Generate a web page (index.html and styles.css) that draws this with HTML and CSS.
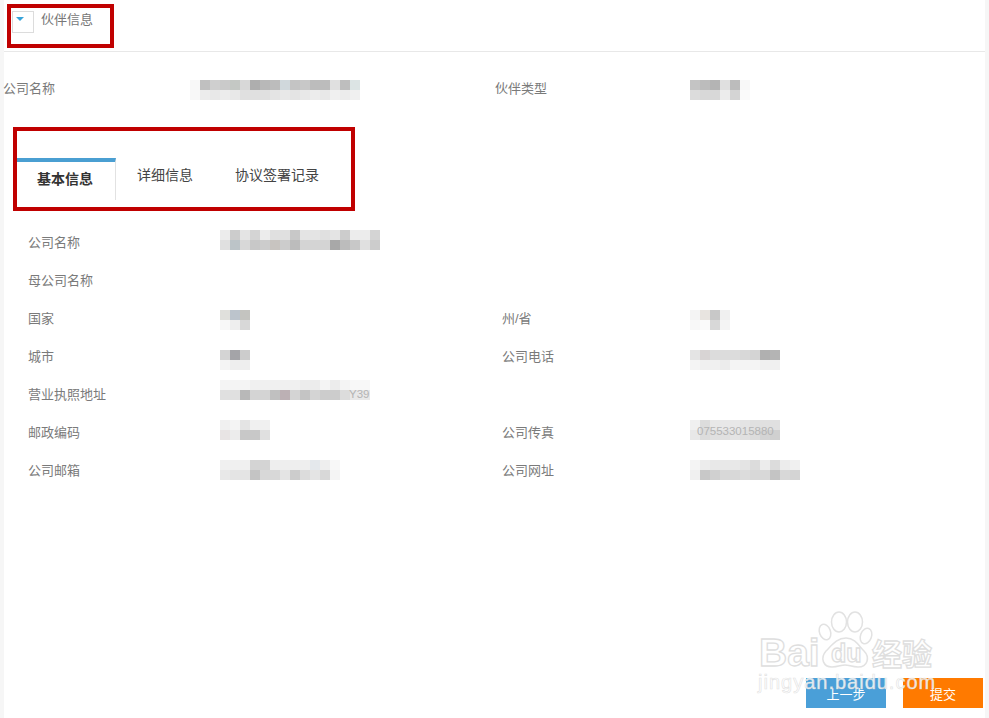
FILE: index.html
```html
<!DOCTYPE html>
<html lang="zh-CN">
<head>
<meta charset="utf-8">
<title>伙伴信息</title>
<link rel="stylesheet" href="styles.css">
</head>
<body>
<main class="page">
  <header class="head">
    <span class="check"><svg class="caret" viewBox="0 0 8 4" width="8" height="4"><path d="M0 0H8L4 4Z"/></svg></span>
    <span class="head-title">伙伴信息</span>
  </header>

  <section class="summary">
    <span class="label">公司名称</span>
    <svg class="mosaic mt8" width="170" height="20">
      <rect fill="#f8f8f8"/><rect x="10" fill="#c0c0c0"/><rect x="20" fill="#cfcfcf"/><rect x="30" fill="#cacaca"/><rect x="40" fill="#c4c8c4"/><rect x="50" fill="#d8d8d8"/><rect x="60" fill="#aeaeae"/><rect x="70" fill="#b8b8b8"/><rect x="80" fill="#bcbcbc"/><rect x="90" fill="#d0d8dc"/><rect x="100" fill="#c4c4c4"/><rect x="110" fill="#c8c8c8"/><rect x="120" fill="#bcbcbc"/><rect x="130" fill="#bcbcbc"/><rect x="140" fill="#e0e0e0"/><rect x="150" fill="#bebebe"/><rect x="160" fill="#dce4e4"/>
      <rect y="10" fill="#f8f8f8"/><rect x="10" y="10" fill="#ececec"/><rect x="20" y="10" fill="#e8e8e8"/><rect x="30" y="10" fill="#ececec"/><rect x="40" y="10" fill="#e8e8e8"/><rect x="50" y="10" fill="#e0e0e0"/><rect x="60" y="10" fill="#e0e0e0"/><rect x="70" y="10" fill="#e0e0e0"/><rect x="80" y="10" fill="#e4e4e4"/><rect x="90" y="10" fill="#e8e8e8"/><rect x="100" y="10" fill="#e4e4e4"/><rect x="110" y="10" fill="#e8e8e8"/><rect x="120" y="10" fill="#ececec"/><rect x="130" y="10" fill="#e8e8e8"/><rect x="140" y="10" fill="#f0f0f0"/><rect x="150" y="10" fill="#ececec"/><rect x="160" y="10" fill="#f0f0f0"/>
    </svg>
    <span class="label">伙伴类型</span>
    <svg class="mosaic mt8" width="60" height="20">
      <rect fill="#c4c4c4"/><rect x="10" fill="#bcbcbc"/><rect x="20" fill="#b4b4b4"/><rect x="30" fill="#e0e0e0"/><rect x="40" fill="#bcbcbc"/><rect x="50" fill="#f8f8f8"/>
      <rect y="10" fill="#dcdcdc"/><rect x="10" y="10" fill="#d8d8d8"/><rect x="20" y="10" fill="#d8d8d8"/><rect x="30" y="10" fill="#ececec"/><rect x="40" y="10" fill="#d4d4d4"/><rect x="50" y="10" fill="#fafafa"/>
    </svg>
  </section>

  <nav class="tabs">
    <span class="tab tab-active">基本信息</span>
    <span class="tab">详细信息</span>
    <span class="tab">协议签署记录</span>
  </nav>

  <section class="form">
    <span class="label">公司名称</span>
    <svg class="mosaic mt7" width="160" height="20">
      <rect fill="#ececec"/><rect x="10" fill="#cccccc"/><rect x="20" fill="#e4e4e4"/><rect x="30" fill="#d4d4d4"/><rect x="40" fill="#ececec"/><rect x="50" fill="#e0e0e0"/><rect x="60" fill="#e0e0e0"/><rect x="70" fill="#c8c8c8"/><rect x="80" fill="#e4e4e4"/><rect x="90" fill="#e4e4e4"/><rect x="100" fill="#e0e0e0"/><rect x="110" fill="#e4e4e4"/><rect x="120" fill="#cccccc"/><rect x="130" fill="#ececec"/><rect x="140" fill="#ececec"/><rect x="150" fill="#d4d4d4"/>
      <rect y="10" fill="#e0e0e0"/><rect x="10" y="10" fill="#bcc4c8"/><rect x="20" y="10" fill="#d8d8d8"/><rect x="30" y="10" fill="#c8c8c8"/><rect x="40" y="10" fill="#cccccc"/><rect x="50" y="10" fill="#c8c4c0"/><rect x="60" y="10" fill="#cccccc"/><rect x="70" y="10" fill="#bcbcbc"/><rect x="80" y="10" fill="#d4d4d4"/><rect x="90" y="10" fill="#d4d4d4"/><rect x="100" y="10" fill="#d4d4d4"/><rect x="110" y="10" fill="#a8a8a8"/><rect x="120" y="10" fill="#bcbcbc"/><rect x="130" y="10" fill="#c8c8c8"/><rect x="140" y="10" fill="#e0e0e0"/><rect x="150" y="10" fill="#cccccc"/>
    </svg>
    <span></span><span></span>

    <span class="label">母公司名称</span>
    <span></span><span></span><span></span>

    <span class="label">国家</span>
    <svg class="mosaic mt11" width="30" height="20">
      <rect fill="#e0e0dc"/><rect x="10" fill="#bcc4cc"/><rect x="20" fill="#c4c4c0"/>
      <rect y="10" fill="#f8f8f8"/><rect x="10" y="10" fill="#eeeeee"/><rect x="20" y="10" fill="#d8d8d8"/>
    </svg>
    <span class="label">州/省</span>
    <svg class="mosaic mt11" width="40" height="20">
      <rect fill="#f4f4f4"/><rect x="10" fill="#e8e4e0"/><rect x="20" fill="#c8c8c8"/><rect x="30" fill="#f0f0f0"/>
      <rect y="10" fill="#f8f8f8"/><rect x="10" y="10" fill="#fafafa"/><rect x="20" y="10" fill="#d8d8d8"/><rect x="30" y="10" fill="#f4f4f4"/>
    </svg>

    <span class="label">城市</span>
    <svg class="mosaic mt13" width="30" height="20">
      <rect fill="#d4d4d4"/><rect x="10" fill="#a4a4a8"/><rect x="20" fill="#cccccc"/>
      <rect y="10" fill="#f4f4f4"/><rect x="10" y="10" fill="#eeeeee"/><rect x="20" y="10" fill="#eeeeee"/>
    </svg>
    <span class="label">公司电话</span>
    <svg class="mosaic mt13" width="90" height="20">
      <rect fill="#e4e4e4"/><rect x="10" fill="#d8d4d4"/><rect x="20" fill="#dcdcdc"/><rect x="30" fill="#dcdcdc"/><rect x="40" fill="#dcdcdc"/><rect x="50" fill="#d8d8d8"/><rect x="60" fill="#d4d4d4"/><rect x="70" fill="#b0b0b0"/><rect x="80" fill="#b4b4b4"/>
      <rect y="10" fill="#f4f4f4"/><rect x="10" y="10" fill="#f0f0f0"/><rect x="20" y="10" fill="#f0f0f0"/><rect x="30" y="10" fill="#ececec"/><rect x="40" y="10" fill="#f4f4f4"/><rect x="50" y="10" fill="#f4f4f4"/><rect x="60" y="10" fill="#f4f4f4"/><rect x="70" y="10" fill="#f0f0f0"/><rect x="80" y="10" fill="#f0f0f0"/>
    </svg>

    <span class="label">营业执照地址</span>
    <svg class="mosaic mt5" width="150" height="20">
      <rect fill="#f4f4f4"/><rect x="10" fill="#f4f4f4"/><rect x="20" fill="#f4f4f4"/><rect x="30" fill="#f0f0f0"/><rect x="40" fill="#f0f0f0"/><rect x="50" fill="#f0f0f0"/><rect x="60" fill="#f0f0f0"/><rect x="70" fill="#f0f0f0"/><rect x="80" fill="#ececec"/><rect x="90" fill="#ececec"/><rect x="100" fill="#f4f4f4"/><rect x="110" fill="#ececec"/><rect x="120" fill="#f4f4f4"/><rect x="130" fill="#f8f8f8"/><rect x="140" fill="#f8f8f8"/>
      <rect y="10" fill="#e0e0e0"/><rect x="10" y="10" fill="#e0e0e0"/><rect x="20" y="10" fill="#b8b8b8"/><rect x="30" y="10" fill="#d4d4d4"/><rect x="40" y="10" fill="#d4d4d4"/><rect x="50" y="10" fill="#c0c0c0"/><rect x="60" y="10" fill="#bcb0b4"/><rect x="70" y="10" fill="#d4d4d4"/><rect x="80" y="10" fill="#c4c4c4"/><rect x="90" y="10" fill="#d4d4d4"/><rect x="100" y="10" fill="#cccccc"/><rect x="110" y="10" fill="#cccccc"/><rect x="120" y="10" fill="#dcdcdc"/><rect x="130" y="10" fill="#e8e8e8"/><rect x="140" y="10" fill="#e8e8e8"/>
      <text class="mosaic-text" x="129" y="18">Y39</text>
    </svg>
    <span></span><span></span>

    <span class="label">邮政编码</span>
    <svg class="mosaic mt7" width="50" height="20">
      <rect fill="#f0f0f0"/><rect x="10" fill="#f4f4f4"/><rect x="20" fill="#e4e4e4"/><rect x="30" fill="#f0f0f0"/><rect x="40" fill="#f0f0f0"/>
      <rect y="10" fill="#e8e4e4"/><rect x="10" y="10" fill="#ececec"/><rect x="20" y="10" fill="#c8c8c8"/><rect x="30" y="10" fill="#c8c8c8"/><rect x="40" y="10" fill="#e0e0e0"/>
    </svg>
    <span class="label">公司传真</span>
    <svg class="mosaic mt7" width="90" height="20">
      <rect fill="#f0f0f0"/><rect x="10" fill="#dcdcdc"/><rect x="20" fill="#e8e8e8"/><rect x="30" fill="#e8e8e8"/><rect x="40" fill="#e8e8e8"/><rect x="50" fill="#e4e4e4"/><rect x="60" fill="#e0e0e0"/><rect x="70" fill="#e0e0e0"/><rect x="80" fill="#e0e0e0"/>
      <rect y="10" fill="#e8e8e8"/><rect x="10" y="10" fill="#dcdcdc"/><rect x="20" y="10" fill="#e0e0e0"/><rect x="30" y="10" fill="#e0e0e0"/><rect x="40" y="10" fill="#e4e4e4"/><rect x="50" y="10" fill="#e0e0e0"/><rect x="60" y="10" fill="#dcdcdc"/><rect x="70" y="10" fill="#d4d4d4"/><rect x="80" y="10" fill="#d0d0d0"/>
      <text class="mosaic-text" x="7" y="15">075533015880</text>
    </svg>

    <span class="label">公司邮箱</span>
    <svg class="mosaic mt9" width="120" height="20">
      <rect fill="#f0f0f0"/><rect x="10" fill="#f0f0f0"/><rect x="20" fill="#f0f0f0"/><rect x="30" fill="#d4d4d4"/><rect x="40" fill="#d4d4d4"/><rect x="50" fill="#eeeeee"/><rect x="60" fill="#eeeeee"/><rect x="70" fill="#eeeeee"/><rect x="80" fill="#eeeeee"/><rect x="90" fill="#e4e8ec"/><rect x="100" fill="#eeeeee"/><rect x="110" fill="#f8f8f8"/>
      <rect y="10" fill="#e8e8e8"/><rect x="10" y="10" fill="#e4e4e4"/><rect x="20" y="10" fill="#e4e4e4"/><rect x="30" y="10" fill="#c4c4c4"/><rect x="40" y="10" fill="#d8d8d8"/><rect x="50" y="10" fill="#d8d8d8"/><rect x="60" y="10" fill="#e4e4e4"/><rect x="70" y="10" fill="#cccccc"/><rect x="80" y="10" fill="#dcdcdc"/><rect x="90" y="10" fill="#e4e4e4"/><rect x="100" y="10" fill="#d8d8d8"/><rect x="110" y="10" fill="#f4f4f4"/>
    </svg>
    <span class="label">公司网址</span>
    <svg class="mosaic mt9" width="110" height="20">
      <rect fill="#f4f4f4"/><rect x="10" fill="#ececec"/><rect x="20" fill="#e8e8e8"/><rect x="30" fill="#e8e8e8"/><rect x="40" fill="#e8e8e8"/><rect x="50" fill="#e4e4e4"/><rect x="60" fill="#dcdcdc"/><rect x="70" fill="#ececec"/><rect x="80" fill="#dcdcdc"/><rect x="90" fill="#ececec"/><rect x="100" fill="#f0f0f0"/>
      <rect y="10" fill="#f0f0f0"/><rect x="10" y="10" fill="#c8c8c8"/><rect x="20" y="10" fill="#d0d0d0"/><rect x="30" y="10" fill="#d8d8d8"/><rect x="40" y="10" fill="#d8d8d8"/><rect x="50" y="10" fill="#dcdcdc"/><rect x="60" y="10" fill="#d8d8d8"/><rect x="70" y="10" fill="#d8d8d8"/><rect x="80" y="10" fill="#c4c4c4"/><rect x="90" y="10" fill="#d8d8d8"/><rect x="100" y="10" fill="#d4d4d4"/>
    </svg>
  </section>

  <footer class="actions">
    <button class="btn btn-prev" type="button">上一步</button>
    <button class="btn btn-submit" type="button">提交</button>
  </footer>
</main>

<div class="mark mark-head"></div>
<div class="mark mark-tabs"></div>

<svg class="watermark" width="200" height="100" viewBox="750 605 200 100">
  <g class="wm-shape">
    <ellipse cx="825" cy="632" rx="5.5" ry="8" transform="rotate(-20 825 632)"/>
    <ellipse cx="839" cy="622" rx="7.5" ry="10"/>
    <ellipse cx="855" cy="622" rx="7.5" ry="10"/>
    <ellipse cx="866" cy="636" rx="5.5" ry="8" transform="rotate(20 866 636)"/>
    <path d="M846 638C855 638 859 646 864 651C870 657 868 667 858 667C852 667 849 665 845 665C841 665 838 667 832 667C823 667 820 658 826 651C832 645 837 638 846 638Z"/>
  </g>
  <text class="wm-text wm-bai" x="759" y="666">Bai</text>
  <text class="wm-text wm-du" x="831" y="662">du</text>
  <text class="wm-text wm-cn" x="872" y="665">经验</text>
  <text class="wm-url" x="758" y="689">jingyan.baidu.com</text>
</svg>
</body>
</html>
```

FILE: styles.css
```css
* { box-sizing: border-box; }

html, body {
  margin: 0;
  height: 718px;
  overflow: hidden;
}

body {
  position: relative;
  padding: 0 4px;
  background: #f6f6f6;
  font-family: "Liberation Sans", "Noto Sans CJK SC", sans-serif;
  font-size: 13px;
  color: #7a7a7a;
}

.page {
  display: flex;
  flex-direction: column;
  height: 718px;
  background: #fff;
}

.head {
  display: flex;
  align-items: flex-start;
  gap: 7px;
  height: 52px;
  padding: 11px 0 0 8px;
  border-bottom: 1px solid #e8e8e8;
}

.check {
  display: flex;
  justify-content: flex-start;
  flex: none;
  width: 22px;
  height: 22px;
  padding: 5px 0 0 3px;
  border: 1px solid #dcdcdc;
}

.caret { fill: #36a3d9; }

.head-title {
  line-height: 18px;
  color: #777;
}

.label {
  padding-top: 1px;
  line-height: 32px;
  white-space: nowrap;
}

.summary {
  display: grid;
  grid-template-columns: 187px 305px 195px 1fr;
  height: 32px;
  margin: 20px 0 0 -1px;
}

.mosaic {
  display: block;
  overflow: visible;
}

.mosaic rect {
  width: 10px;
  height: 10px;
}

.mosaic-text {
  font-family: "Liberation Sans", sans-serif;
  font-size: 11.5px;
  fill: #b4b4b4;
}

.mt5 { margin-top: 5px; }
.mt7 { margin-top: 7px; }
.mt8 { margin-top: 8px; }
.mt9 { margin-top: 9px; }
.mt11 { margin-top: 11px; }
.mt13 { margin-top: 13px; }

.tabs {
  display: flex;
  align-items: flex-start;
  margin-top: 54px;
  padding-left: 12px;
  font-size: 14px;
  color: #444;
}

.tab {
  height: 42px;
  padding: 0 21px;
  line-height: 34px;
}

.tab-active {
  width: 100px;
  padding: 0 0 0 21px;
  border-top: 4px solid #4a9fd2;
  border-right: 1px solid #e2e2e2;
  font-weight: 700;
  color: #333;
}

.form {
  display: grid;
  grid-template-columns: 192px 282px 188px 1fr;
  grid-auto-rows: 38px;
  margin-top: 23px;
  padding-left: 24px;
}

.form .label { line-height: 38px; }

.actions {
  display: flex;
  justify-content: flex-end;
  gap: 17px;
  margin-top: auto;
  padding: 0 2px 10px 0;
}

.btn {
  width: 80px;
  height: 30px;
  padding: 0;
  border: 0;
  font: inherit;
  color: #fff;
}

.btn-prev { background: #4a9fd8; }
.btn-submit { background: #ff7a00; }

.mark {
  position: absolute;
  border: 4px solid #c00000;
}

.mark-head {
  left: 7px;
  top: 4px;
  width: 107px;
  height: 44px;
}

.mark-tabs {
  left: 13px;
  top: 127px;
  width: 342px;
  height: 84px;
}

.watermark {
  position: absolute;
  left: 750px;
  top: 605px;
  pointer-events: none;
}

.wm-shape {
  fill: #fff;
  fill-opacity: 0.6;
  stroke: #e2e2e2;
  stroke-width: 1.5;
}

.wm-text {
  font-family: "Liberation Sans", "Noto Sans CJK SC", sans-serif;
  font-weight: 700;
  fill: #fff;
  stroke: #dedede;
  stroke-width: 1.3;
}

.wm-bai { font-size: 39px; }
.wm-du { font-size: 25px; }
.wm-cn { font-size: 30px; }

.wm-url {
  font-family: "Liberation Sans", sans-serif;
  font-size: 20px;
  letter-spacing: 1px;
  fill: #fff;
  fill-opacity: 0.85;
  stroke: #d8d8d8;
  stroke-opacity: 0.7;
  stroke-width: 0.7;
}
```
